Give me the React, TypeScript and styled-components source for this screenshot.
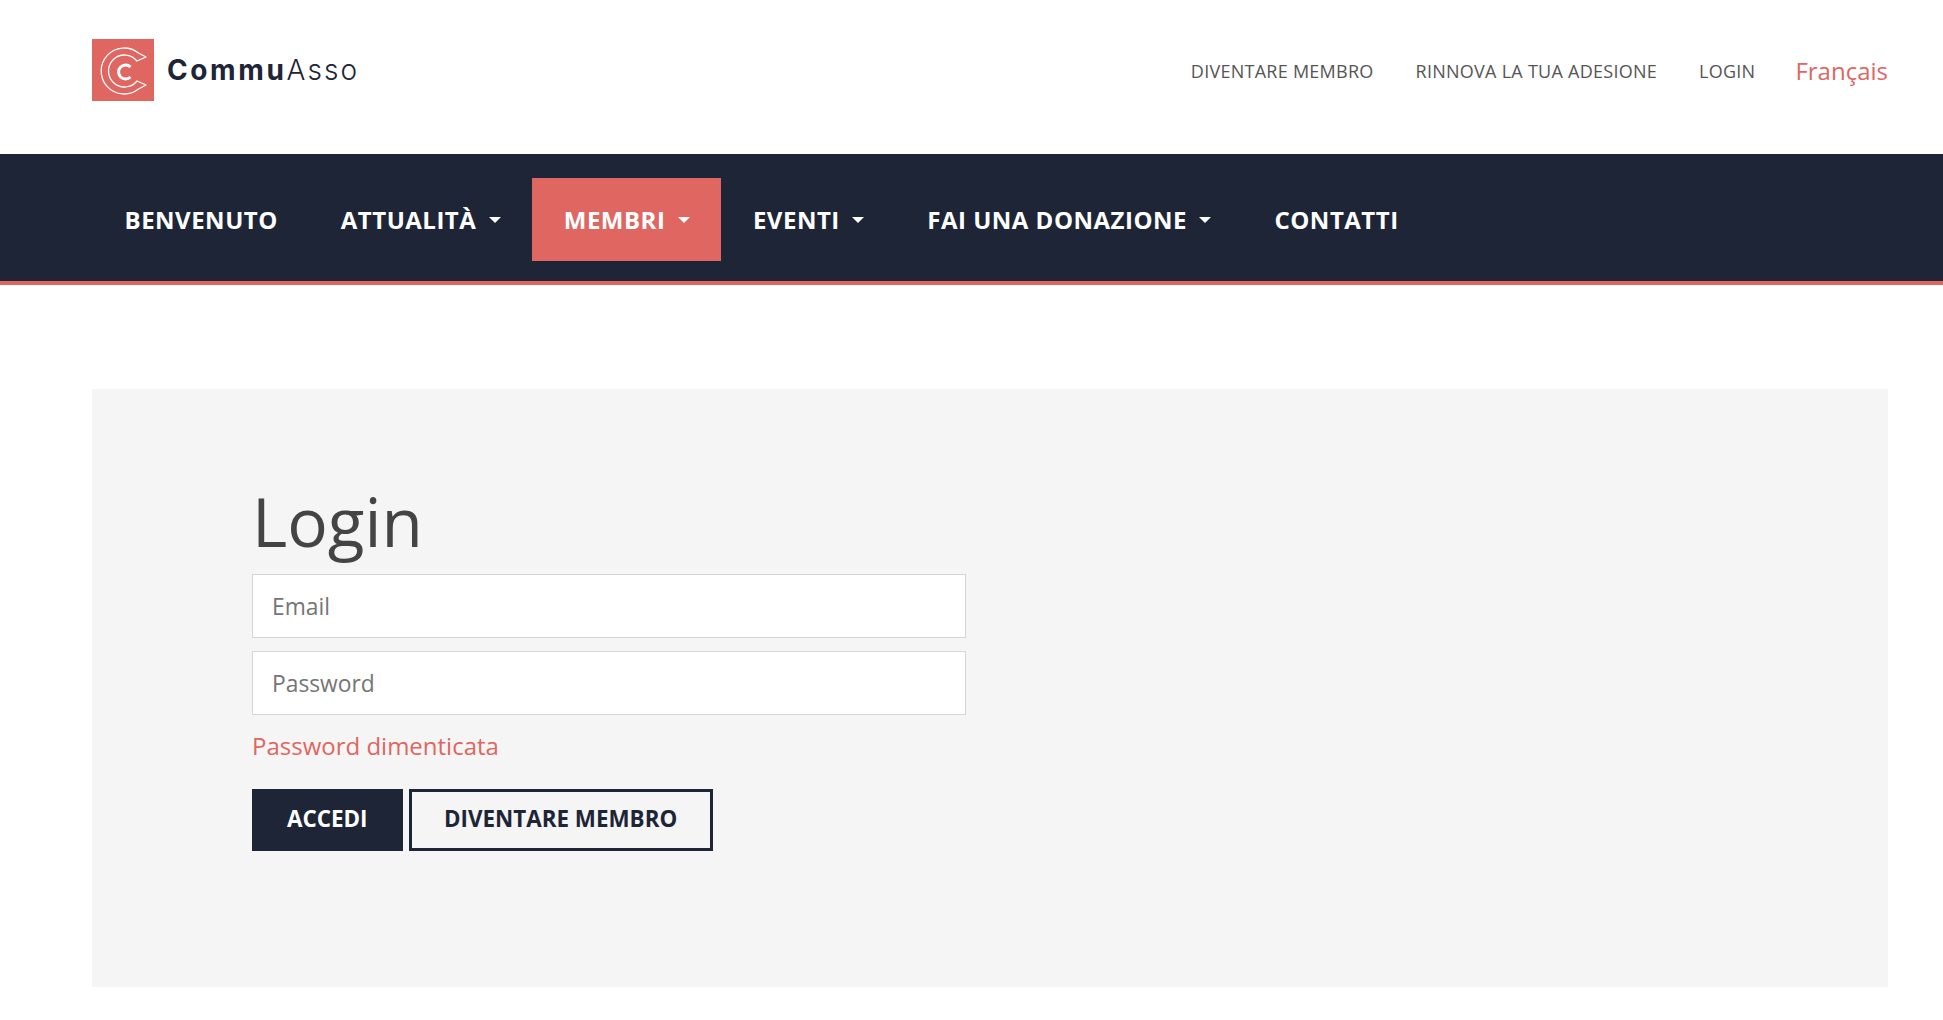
import React from "react";
import styled, { createGlobalStyle } from "styled-components";

const Global = createGlobalStyle`
  html, body { margin: 0; padding: 0; background: #fff; }
  body { font-family: "Open Sans", "Liberation Sans", sans-serif; color: #444; overflow: hidden; }
  * { box-sizing: border-box; }
`;

const Header = styled.header`
  height: 154px;
  padding: 0 55px 0 92px;
  display: flex;
  align-items: center;
  justify-content: space-between;
`;
const Brand = styled.a`
  display: flex;
  align-items: center;
  gap: 13px;
  margin-top: -14px;
`;
const LogoMark = styled.svg`
  width: 62px;
  height: 62px;
  display: block;
`;
const BrandName = styled.span`
  font-family: Inter, "Liberation Sans", sans-serif;
  font-size: 28px;
  letter-spacing: 2.6px;
  color: #1e2537;
  font-weight: 700;
  line-height: 1;
`;
const BrandLight = styled.span`
  font-weight: 300;
  letter-spacing: 2.1px;
`;
const TopLinks = styled.nav`
  display: flex;
  align-items: center;
  gap: 42px;
  margin-top: -12px;
`;
const TopLink = styled.a`
  font-size: 18px;
  letter-spacing: 0.26px;
  color: #555;
  text-transform: uppercase;
  line-height: 24px;
`;
const LangLink = styled.a`
  font-size: 24px;
  color: #e06661;
  margin-left: -2px;
  line-height: 30px;
`;
const MainNav = styled.nav`
  height: 131px;
  background: #1e2537;
  border-bottom: 4px solid #e06661;
  padding: 24px 0 0 93px;
  display: flex;
  align-items: flex-start;
`;
const NavItem = styled.a<{ $active?: boolean }>`
  height: 83px;
  padding: 0 31.5px;
  display: flex;
  align-items: center;
  gap: 12.5px;
  background: ${(p) => (p.$active ? "#e06661" : "transparent")};
  color: #fff;
  font-size: 24px;
  font-weight: 700;
  letter-spacing: 0.5px;
  text-transform: uppercase;
`;
const Caret = styled.span`
  width: 0;
  height: 0;
  border-top: 6px solid #fff;
  border-left: 6px solid transparent;
  border-right: 6px solid transparent;
`;
const Main = styled.main`
  padding: 104px 55px 0 92px;
`;
const Panel = styled.section`
  background: #f5f5f5;
  height: 598px;
  padding: 89px 160px 0;
`;
const Title = styled.h1`
  margin: 0 0 9px;
  font-size: 67.5px;
  font-weight: 400;
  line-height: 87px;
  color: #444;
`;
const Form = styled.form`
  width: 714px;
  display: flex;
  flex-direction: column;
`;
const Field = styled.input`
  width: 100%;
  height: 64px;
  margin-bottom: 13px;
  padding: 0 19px;
  border: 1px solid #d6d6d6;
  background: #fff;
  font-family: inherit;
  font-size: 22.8px;
  color: #444;
  &::placeholder { color: #757575; opacity: 1; }
`;
const Forgot = styled.a`
  font-size: 24px;
  line-height: 32px;
  color: #e06661;
  margin-top: 2px;
`;
const Buttons = styled.div`
  display: flex;
  gap: 6px;
  margin-top: 27px;
`;
const Button = styled.button<{ $outline?: boolean }>`
  height: 62px;
  padding: 0 ${(p) => (p.$outline ? "32.5px" : "32px")} 3px;
  font-family: inherit;
  font-size: 22.4px;
  font-weight: 700;
  text-transform: uppercase;
  border: 3px solid #1e2537;
  background: ${(p) => (p.$outline ? "transparent" : "#1e2537")};
  color: ${(p) => (p.$outline ? "#1e2537" : "#fff")};
`;

const items: { label: string; caret?: boolean; active?: boolean }[] = [
  { label: "Benvenuto" },
  { label: "Attualità", caret: true },
  { label: "Membri", caret: true, active: true },
  { label: "Eventi", caret: true },
  { label: "Fai una donazione", caret: true },
  { label: "Contatti" },
];

export default function App() {
  return (
    <>
      <Global />
      <Header>
        <Brand>
          <LogoMark viewBox="0 0 62 62">
            <rect width="62" height="62" fill="#e06661" />
            <path
              d="M54 18L46.500 14A23 23 0 1 0 46.500 50L54 46L45 42A16 16 0 1 1 45 22Z"
              fill="none"
              stroke="#fff"
              strokeWidth="1.300"
              strokeLinejoin="round"
            />
            <path d="M38.500 28A7 7 0 1 0 38.500 38" fill="none" stroke="#fff" strokeWidth="3" />
          </LogoMark>
          <BrandName>
            Commu<BrandLight>Asso</BrandLight>
          </BrandName>
        </Brand>
        <TopLinks>
          <TopLink>Diventare membro</TopLink>
          <TopLink>Rinnova la tua adesione</TopLink>
          <TopLink>Login</TopLink>
          <LangLink>Français</LangLink>
        </TopLinks>
      </Header>
      <MainNav>
        {items.map((it) => (
          <NavItem key={it.label} $active={it.active}>
            {it.label}
            {it.caret && <Caret />}
          </NavItem>
        ))}
      </MainNav>
      <Main>
        <Panel>
          <Title>Login</Title>
          <Form>
            <Field placeholder="Email" />
            <Field placeholder="Password" />
            <Forgot>Password dimenticata</Forgot>
            <Buttons>
              <Button type="button">Accedi</Button>
              <Button type="button" $outline>Diventare membro</Button>
            </Buttons>
          </Form>
        </Panel>
      </Main>
    </>
  );
}
